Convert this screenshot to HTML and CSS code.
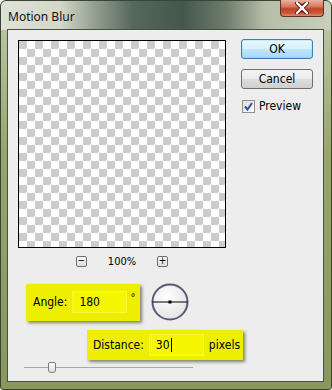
FILE: index.html
```html
<!DOCTYPE html>
<html lang="en">
<head>
    <meta charset="UTF-8">
    <title>Motion Blur</title>
    <link rel="stylesheet" href="styles.css">
</head>
<body>
    <div class="window">
        <div class="titlebar">
            <span class="title">Motion Blur</span>
            <div class="close">
                <svg width="16" height="12" viewBox="0 0 16 12">
                    <path d="M3 1 L8 5 L13 1 M3 11 L8 7 L13 11 M3 1 L13 11 M13 1 L3 11" stroke="#5b2418" stroke-width="4.2" fill="none" stroke-linecap="round"/>
                    <path d="M3 1 L13 11 M13 1 L3 11" stroke="#fff" stroke-width="2.4" fill="none" stroke-linecap="round"/>
                </svg>
            </div>
        </div>
        <div class="client">
            <div class="top">
                <div class="preview-col">
                    <div class="canvas"></div>
                    <div class="zoom-row">
                        <span class="zbtn">−</span>
                        <span class="zoom-val">100%</span>
                        <span class="zbtn">+</span>
                    </div>
                </div>
                <div class="actions">
                    <div class="btn btn-ok">OK</div>
                    <div class="btn">Cancel</div>
                    <div class="check">
                        <span class="box">
                            <svg width="9" height="9" viewBox="0 0 9 9">
                                <path d="M1 4.5 L3.5 7.5 L8 1" stroke="#2a4fa8" stroke-width="2" fill="none"/>
                            </svg>
                        </span>
                        Preview
                    </div>
                </div>
            </div>
            <div class="angle-row">
                <div class="hl angle">
                    <span class="lbl">Angle:</span>
                    <span class="field">180</span>
                    <span class="deg">°</span>
                </div>
                <svg class="dial" width="38" height="38" viewBox="0 0 38 38">
                    <defs>
                        <radialGradient id="dg" cx="40%" cy="35%" r="70%">
                            <stop offset="0" stop-color="#ffffff"/>
                            <stop offset="1" stop-color="#e2e2e6"/>
                        </radialGradient>
                    </defs>
                    <circle cx="19" cy="19" r="17.5" fill="url(#dg)" stroke="#575d78" stroke-width="2"/>
                    <line x1="1.5" y1="19" x2="36.5" y2="19" stroke="#000" stroke-width="1"/>
                    <rect x="17.5" y="17.5" width="3" height="3" fill="#000"/>
                </svg>
            </div>
            <div class="hl distance">
                <span class="lbl">Distance:</span>
                <span class="field">30<span class="caret"></span></span>
                <span class="unit">pixels</span>
            </div>
            <div class="slider">
                <span class="thumb"></span>
            </div>
        </div>
    </div>
</body>
</html>
```

FILE: styles.css
```css
body {
    margin: 0;
    background: #ffffff;
}

.window {
    width: 332px;
    height: 390px;
    box-sizing: border-box;
    border: 1px solid #3a4633;
    border-radius: 6px 6px 3px 3px;
    background:
        linear-gradient(to right, #dfe2d6 0%, #d3d8c8 18%, #95a192 28%, #56685c 40%, #44574c 55%, #6d7c6b 68%, #b5bda7 80%, #c9cfba 100%) top / 100% 29px no-repeat,
        linear-gradient(#c3c9ab, #98a46c 40%, #8a965c 100%);
    font-family: "DejaVu Sans Condensed", "DejaVu Sans", sans-serif;
    font-stretch: condensed;
    font-size: 12px;
    color: #000;
}

.titlebar {
    height: 28px;
    display: flex;
    align-items: flex-start;
}

.title {
    font-family: "Noto Sans", sans-serif;
    font-stretch: normal;
    font-size: 12px;
    color: #111;
    margin: 7px 0 0 7px;
}

.close {
    margin-left: auto;
    margin-right: 7px;
    margin-top: -1px;
    width: 44px;
    height: 17px;
    box-sizing: border-box;
    border: 1px solid #5c3127;
    border-top: 0;
    border-radius: 0 0 4px 4px;
    background: linear-gradient(#e9b2a0 0%, #d47a60 40%, #c0432a 55%, #c9563a 80%, #e08a68 100%);
    display: flex;
    align-items: center;
    justify-content: center;
}

.client {
    margin-left: 6px;
    width: 317px;
    height: 353px;
    box-sizing: border-box;
    border: 1px solid #46523d;
    background: #ededed;
    padding: 10px 0 0 10px;
}

.top {
    display: flex;
}

.preview-col {
    width: 208px;
}

.canvas {
    width: 208px;
    height: 208px;
    box-sizing: border-box;
    border: 1px solid #000;
    background-color: #fff;
    background-image: conic-gradient(#fff 25%, #cccccc 0 50%, #fff 0 75%, #cccccc 0);
    background-size: 16px 16px;
}

.zoom-row {
    margin-top: 8px;
    display: flex;
    justify-content: center;
    align-items: center;
    gap: 21px;
    height: 11px;
}

.zbtn {
    width: 11px;
    height: 11px;
    box-sizing: border-box;
    border: 1px solid #6f6f6f;
    border-radius: 2px;
    background: linear-gradient(#fafafa, #dcdcdc);
    font-size: 10px;
    line-height: 8px;
    text-align: center;
    font-family: "DejaVu Sans", sans-serif;
}

.zoom-val {
    font-size: 11px;
}

.actions {
    margin-left: 15px;
    margin-top: -1px;
    width: 72px;
}

.btn {
    height: 20px;
    box-sizing: border-box;
    border: 1px solid #707070;
    border-radius: 3px;
    background: linear-gradient(#f4f4f4 0%, #ebebeb 48%, #dddddd 52%, #cfcfcf 100%);
    text-align: center;
    line-height: 18px;
    font-size: 12px;
    margin-bottom: 10px;
}

.btn-ok {
    border-color: #3c7fb1;
    background: linear-gradient(#eaf6fd 0%, #d9f0fc 48%, #bee6fd 52%, #a7d9f5 100%);
    box-shadow: inset 0 0 0 1px #48d6fd44;
}

.check {
    display: flex;
    align-items: center;
    gap: 4px;
    margin-top: 2px;
    margin-left: 1px;
    font-size: 12px;
}

.box {
    width: 13px;
    height: 13px;
    box-sizing: border-box;
    border: 1px solid #8e8f8f;
    background: linear-gradient(135deg, #dcdcdc, #ffffff);
    display: flex;
    align-items: center;
    justify-content: center;
}

.angle-row {
    margin-top: 16px;
    margin-left: 8px;
    display: flex;
    align-items: center;
    gap: 11px;
}

.hl {
    display: flex;
    align-items: center;
    background: #eeee00;
    box-shadow: 2px 2px 3px rgba(40, 40, 0, 0.55);
    box-sizing: border-box;
}

.angle {
    width: 114px;
    height: 37px;
    padding-left: 7px;
}

.field {
    width: 55px;
    height: 22px;
    box-sizing: border-box;
    border: 1px solid #f8f83a;
    background: #f6f600;
    padding-left: 6px;
    line-height: 20px;
    display: flex;
    align-items: center;
}

.angle .field {
    margin-left: 5px;
}

.deg {
    margin-left: 3px;
    align-self: flex-start;
    margin-top: 7px;
    font-size: 11px;
}

.distance {
    margin-top: 9px;
    margin-left: 69px;
    width: 156px;
    height: 30px;
    padding-left: 6px;
}

.distance .field {
    margin-left: 5px;
}

.caret {
    width: 1px;
    height: 14px;
    background: #000;
    margin-left: 1px;
}

.unit {
    margin-left: 5px;
}

.slider {
    margin-top: 1px;
    margin-left: 6px;
    width: 169px;
    height: 13px;
    display: flex;
    align-items: center;
    background: linear-gradient(#a8a8a8, #a8a8a8) 0 6px / 100% 1px no-repeat;
}

.thumb {
    margin-left: 24px;
    width: 8px;
    height: 11px;
    box-sizing: border-box;
    border: 1px solid #7a7a7a;
    border-radius: 2px 2px 3px 3px;
    background: linear-gradient(#fdfdfd, #dedede);
}
```
